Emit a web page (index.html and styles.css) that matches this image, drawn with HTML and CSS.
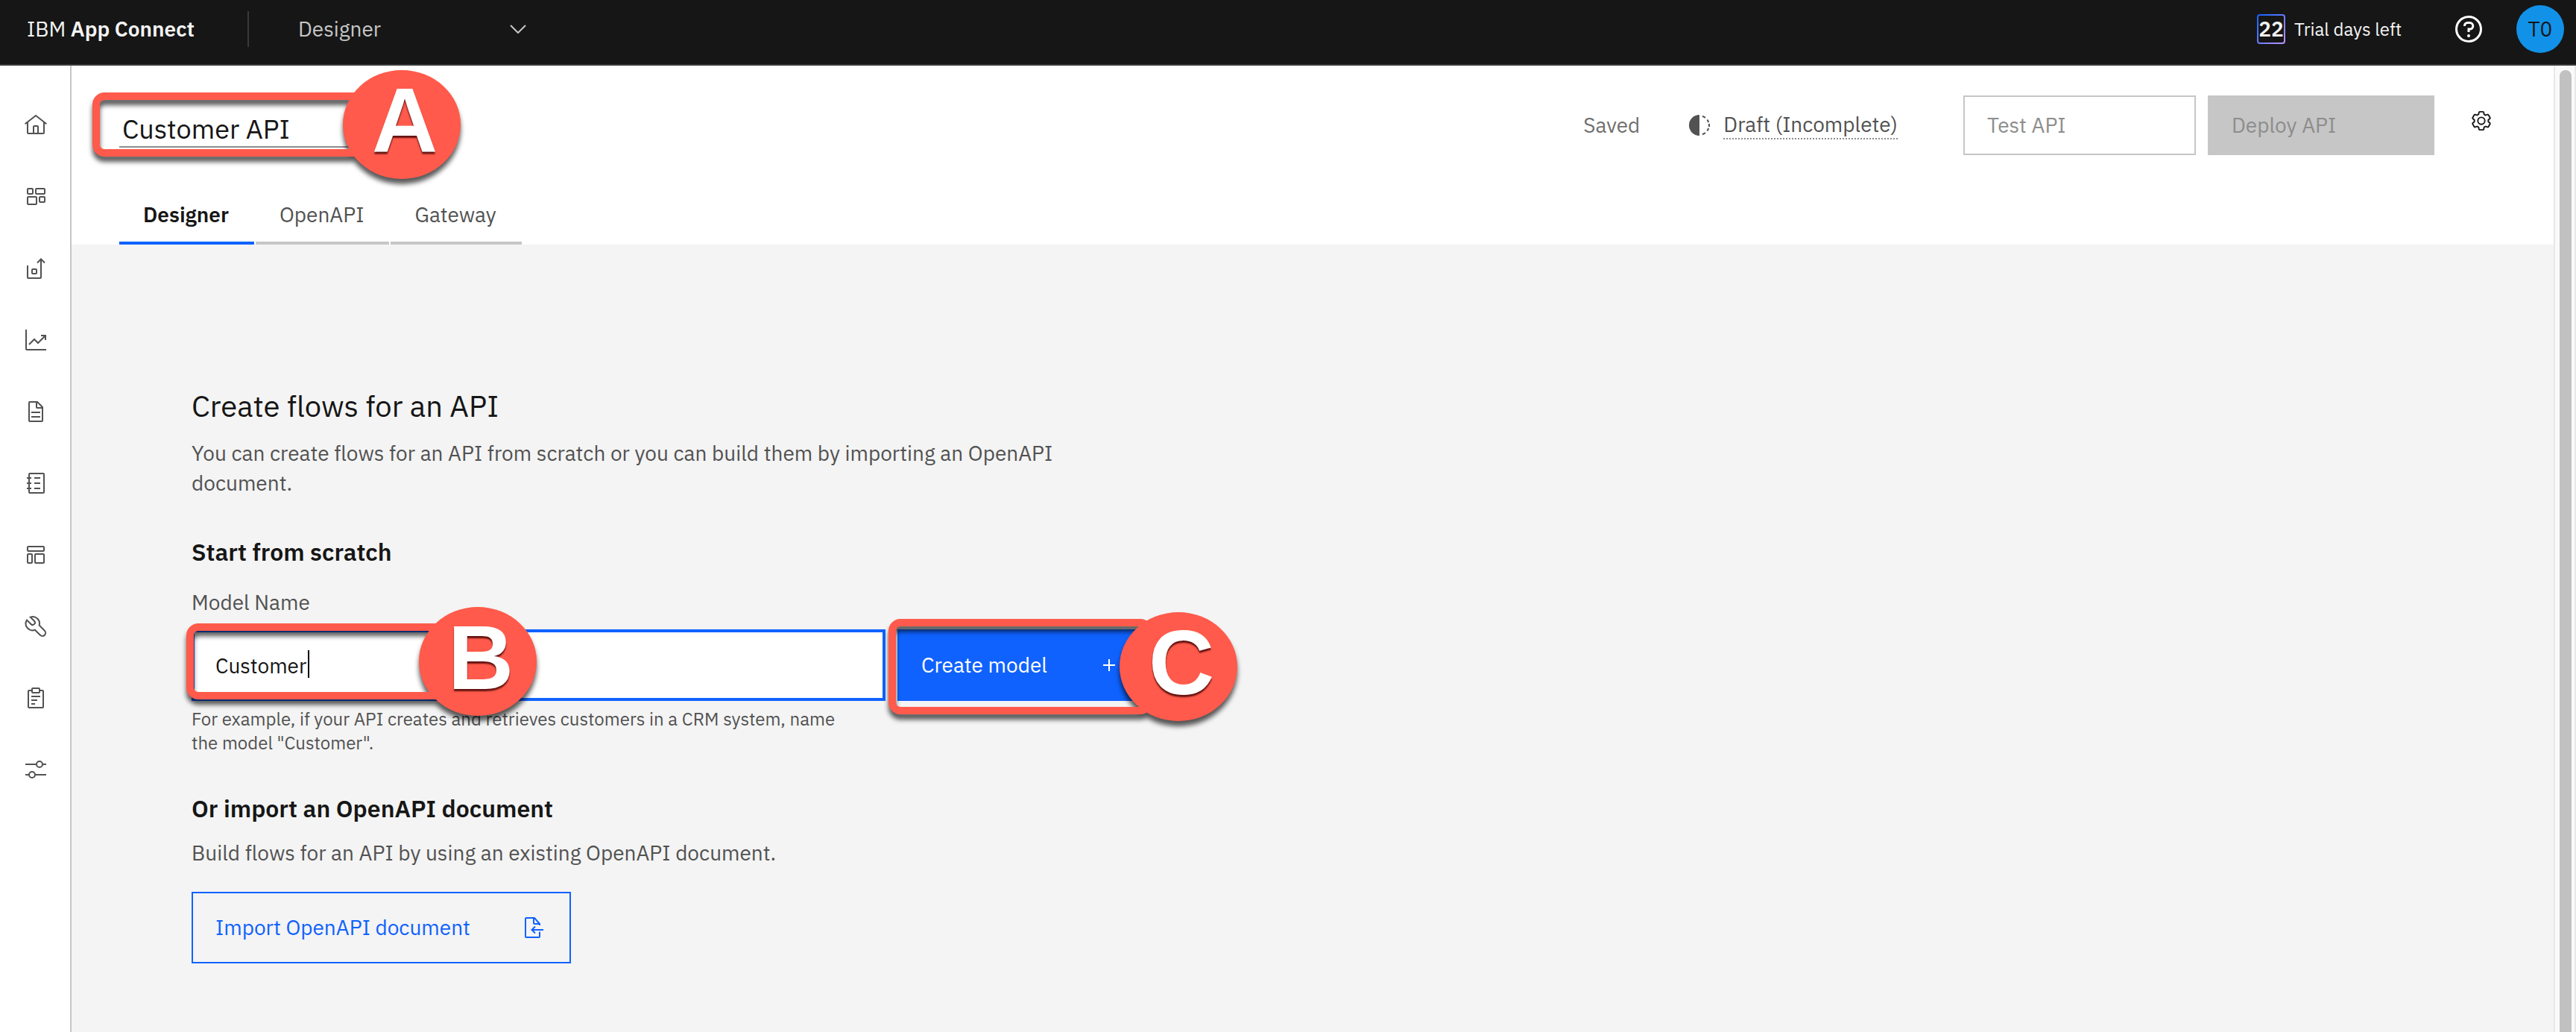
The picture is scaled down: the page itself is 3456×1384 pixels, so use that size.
FILE: index.html
```html
<!DOCTYPE html>
<html lang="en">
<head>
<meta charset="utf-8">
<title>IBM App Connect - Designer</title>
<link rel="stylesheet" href="styles.css">
</head>
<body>
<header class="topbar">
  <a class="brand" href="#">IBM <strong>App Connect</strong></a>
  <button class="switcher" type="button">Designer
    <svg class="icon-chevron" viewBox="0 0 22 12"><path d="M1 1l10 10L21 1"/></svg>
  </button>
  <div class="topbar-right">
    <div class="trial"><span class="trial-days">22</span><span class="trial-text">Trial days left</span></div>
    <button class="help" type="button" aria-label="Help">
      <svg viewBox="0 0 36 36"><circle cx="18" cy="18" r="16.5"/><path d="M12.5 14v-.5a4 4 0 0 1 4-4h3a4.300 4.300 0 0 1 0 8.600H18V22"/><circle class="dot" cx="18" cy="27" r="2"/></svg>
    </button>
    <button class="avatar" type="button">T0</button>
  </div>
</header>
<div class="shell">
  <nav class="rail" aria-label="Main">
    <a href="#" aria-label="Home"><svg viewBox="0 0 32 32"><path d="M1.600 14.200L16 3l14.400 11.200M5 12v14a1 1 0 0 0 1 1h20a1 1 0 0 0 1-1V12M13 27v-9a1 1 0 0 1 1-1h4a1 1 0 0 1 1 1v9"/></svg></a>
    <a href="#" aria-label="Dashboard"><svg viewBox="0 0 32 32"><rect x="5" y="5" width="7" height="7" rx="1"/><rect x="16" y="5" width="12" height="7" rx="1"/><rect x="5" y="16" width="12" height="10" rx="1"/><rect x="21" y="16" width="7" height="7" rx="1"/></svg></a>
    <a href="#" aria-label="Deploy"><svg viewBox="0 0 32 32"><path d="M5 12v16a1 1 0 0 0 1 1h16a1 1 0 0 0 1-1V3M18 8.500L23 3.500l5 5"/><rect x="11" y="17" width="6" height="6" rx="1"/></svg></a>
    <a href="#" aria-label="Metrics"><svg viewBox="0 0 32 32"><path d="M3 2v26a1 1 0 0 0 1 1h26M7 22l7-7 5 5L29 10M23 10h6v6"/></svg></a>
    <a href="#" aria-label="Documents"><svg viewBox="0 0 32 32"><path d="M18 3H8a1 1 0 0 0-1 1v24a1 1 0 0 0 1 1h16a1 1 0 0 0 1-1V10zM17 3v7a1 1 0 0 0 1 1h7M10 17h12M10 23h12"/></svg></a>
    <a href="#" aria-label="Catalog"><svg viewBox="0 0 32 32"><rect x="7" y="3" width="20" height="26" rx="1"/><path d="M4 9h6M4 16h6M4 23h6M14 9h8M14 16h8M14 23h8"/></svg></a>
    <a href="#" aria-label="Templates"><svg viewBox="0 0 32 32"><rect x="5" y="5" width="22" height="6" rx="1"/><rect x="5" y="15" width="6" height="12" rx="1"/><rect x="15" y="15" width="12" height="12" rx="1"/></svg></a>
    <a href="#" aria-label="Tools"><svg viewBox="0 0 32 32"><path d="M8.800 3.600A9 9 0 0 1 20.600 14.500L27.800 21.800A4 4 0 0 1 22 27.800L14.800 20.700A9 9 0 0 1 4 7.500L9.500 13A3.100 3.100 0 0 0 14 8.700z"/></svg></a>
    <a href="#" aria-label="Logs"><svg viewBox="0 0 32 32"><path d="M11 6H7a1 1 0 0 0-1 1v21a1 1 0 0 0 1 1h18a1 1 0 0 0 1-1V7a1 1 0 0 0-1-1h-4M10 14h12M10 19h8M10 24h5"/><rect x="11" y="3" width="10" height="6" rx="1"/></svg></a>
    <a href="#" aria-label="Settings"><svg viewBox="0 0 32 32"><path d="M2 9h15M25 9h5M2 23h5M15 23h15"/><circle cx="21" cy="9" r="4"/><circle cx="11" cy="23" r="4"/></svg></a>
  </nav>
  <main class="page">
    <div class="page-head">
      <div class="title-row">
        <div class="title-field">
          <input class="title-input" type="text" value="Customer API" aria-label="API name">
          <div class="callout callout-a"><span class="callout-badge">A</span></div>
        </div>
        <div class="status">
          <span class="saved">Saved</span>
          <svg class="icon-draft" viewBox="0 0 28 28"><path class="half" d="M14 0a14 14 0 0 0 0 28z"/><path class="dash" d="M18 1.600l4 2.300M24.500 6.500l1.800 3.500M27 12v4M26.300 18l-1.800 3.500M22 24.100l-4 2.300"/></svg>
          <a class="draft" href="#">Draft (Incomplete)</a>
          <button class="btn test" type="button" disabled>Test API</button>
          <button class="btn deploy" type="button" disabled>Deploy API</button>
          <button class="gear" type="button" aria-label="Settings"><svg viewBox="0 0 32 32"><path d="M27 16.760c0-.25 0-.5 0-.76s0-.51 0-.77l1.920-1.680A2 2 0 0 0 29.300 11L26.940 7a2 2 0 0 0-1.730-1 2 2 0 0 0-.64.1l-2.430.82a11.350 11.350 0 0 0-1.310-.75l-.51-2.520a2 2 0 0 0-2-1.610H13.640a2 2 0 0 0-2 1.610l-.51 2.520a11.480 11.480 0 0 0-1.320.75L7.430 6.060A2 2 0 0 0 6.790 6 2 2 0 0 0 5.060 7L2.700 11a2 2 0 0 0 .41 2.510L5 15.240c0 .25 0 .5 0 .76s0 .51 0 .77L3.110 18.450A2 2 0 0 0 2.700 21L5.060 25a2 2 0 0 0 1.730 1 2 2 0 0 0 .64-.1l2.430-.82a11.350 11.350 0 0 0 1.310.75l.51 2.520a2 2 0 0 0 2 1.610h4.720a2 2 0 0 0 2-1.610l.51-2.520a11.480 11.480 0 0 0 1.320-.75l2.420.82a2 2 0 0 0 .64.1 2 2 0 0 0 1.730-1L29.300 21a2 2 0 0 0-.41-2.510ZM25.210 24l-3.430-1.160a8.860 8.860 0 0 1-2.710 1.570L18.360 28H13.640l-.71-3.550a9.360 9.360 0 0 1-2.700-1.570L6.790 24 4.430 20l2.720-2.400a8.900 8.900 0 0 1 0-3.130L4.430 12 6.790 8l3.430 1.160a8.860 8.860 0 0 1 2.710-1.570L13.640 4h4.720l.71 3.550a9.360 9.360 0 0 1 2.700 1.570L25.210 8 27.570 12l-2.720 2.400a8.900 8.900 0 0 1 0 3.130L27.570 20Z"/><circle cx="16" cy="16" r="5"/></svg></button>
        </div>
      </div>
      <div class="tabs" role="tablist">
        <button class="tab tab-active" type="button" role="tab" aria-selected="true">Designer</button>
        <button class="tab" type="button" role="tab">OpenAPI</button>
        <button class="tab" type="button" role="tab">Gateway</button>
      </div>
    </div>
    <section class="content">
      <h1>Create flows for an API</h1>
      <p class="intro">You can create flows for an API from scratch or you can build them by importing an OpenAPI document.</p>
      <h2>Start from scratch</h2>
      <label class="field-label" for="model">Model Name</label>
      <div class="model-row">
        <div class="model-field">
          <input class="model-input" id="model" type="text" value="Customer">
          <span class="caret"></span>
          <div class="callout callout-b"><span class="callout-badge">B</span></div>
        </div>
        <div class="create-wrap">
          <button class="btn create" type="button">Create model
            <svg class="icon-plus" viewBox="0 0 16 16"><path d="M8 0v16M0 8h16"/></svg>
          </button>
          <div class="callout callout-c"><span class="callout-badge">C</span></div>
        </div>
      </div>
      <p class="hint">For example, if your API creates and retrieves customers in a CRM system, name the model "Customer".</p>
      <h2>Or import an OpenAPI document</h2>
      <p class="import-text">Build flows for an API by using an existing OpenAPI document.</p>
      <button class="btn import" type="button">Import OpenAPI document
        <svg class="icon-import" viewBox="0 0 28 32"><path d="M22 21.500V28a1 1 0 0 1-1 1H4a1 1 0 0 1-1-1V4a1 1 0 0 1 1-1h11l7 8v2M14 3v7a1 1 0 0 0 1 1h7M27 19H12M16 14.500L11.500 19l4.500 4.500"/></svg>
      </button>
    </section>
  </main>
  <div class="scroll"><div class="thumb"></div></div>
</div>
</body>
</html>
```
FILE: styles.css
```css
* { box-sizing: border-box; }
body {
  margin: 0;
  min-height: 100vh;
  display: flex;
  flex-direction: column;
  font: 28px/40px "IBM Plex Sans", Roboto, sans-serif;
  color: #525252;
  background: #f4f4f4;
}
button, input { font: inherit; color: inherit; border: 0; border-radius: 0; margin: 0; padding: 0; background: none; outline: 0; }
button { text-align: left; }
a { color: inherit; text-decoration: none; }
h1, h2, p { margin: 0; }
svg { display: block; fill: none; stroke: currentColor; stroke-width: 2; flex: none; }

/* top bar */
.topbar {
  height: 88px;
  padding: 0 16px 8px 36px;
  display: flex;
  align-items: center;
  background: #161616;
  border-bottom: 2px solid #393939;
  color: #f4f4f4;
}
.brand { width: 296px; }
.brand strong { font-weight: 600; }
.switcher {
  width: 374px;
  height: 48px;
  padding-left: 66px;
  display: flex;
  align-items: center;
  justify-content: space-between;
  border-left: 2px solid #393939;
  color: #c6c6c6;
}
.icon-chevron { width: 22px; height: 12px; }
.topbar-right { margin-left: auto; display: flex; align-items: center; }
.trial { display: flex; align-items: center; gap: 12px; margin-right: 64px; }
.trial-text { min-width: 152px; font-size: 24px; }
.trial-days {
  width: 38px;
  height: 40px;
  border: 2px solid transparent;
  border-radius: 4px;
  background: linear-gradient(#161616, #161616) padding-box, linear-gradient(135deg, #0f62fe, #be95ff) border-box;
  font-weight: 600;
  line-height: 36px;
  text-align: center;
}
.help { margin-right: 46px; color: #fff; }
.help svg { width: 36px; height: 36px; stroke-width: 3; }
.help .dot { fill: currentColor; stroke: none; }
.avatar { width: 64px; height: 64px; border-radius: 50%; background: #1192e8; color: #161616; text-align: center; }

/* shell */
.shell { flex: 1; display: flex; }
.rail { width: 96px; padding-top: 32px; border-right: 2px solid #c6c6c6; background: #fff; flex: none; }
.rail a { height: 96px; padding-left: 32px; display: flex; align-items: center; }
.rail svg { width: 32px; height: 32px; }
.page { flex: 1; min-width: 0; }
.scroll { width: 30px; padding: 6px 4px 0 6px; display: flex; background: #fafafa; border: solid #e8e8e8; border-width: 0 2px; flex: none; }
.thumb { width: 16px; border-radius: 8px 8px 0 0; background: #c1c1c1; }

/* page header */
.page-head { padding: 40px 82px 0 64px; background: #fff; }
.title-row { height: 80px; display: flex; justify-content: space-between; }
.title-field { position: relative; }
.title-input { width: 340px; height: 70px; padding: 20px 4px 0; border-bottom: 2px solid #8d8d8d; font-size: 36px; line-height: 48px; color: #161616; }
.status { display: flex; align-items: center; }
.saved { color: #6f6f6f; margin-right: 66px; }
.icon-draft { width: 28px; height: 28px; margin-right: 18px; }
.icon-draft .half { fill: currentColor; stroke: none; }
.draft { border-bottom: 2px dotted #8d8d8d; margin-right: 88px; line-height: 36px; }
.btn { display: flex; align-items: center; justify-content: space-between; padding: 0 32px; white-space: nowrap; }
.test { width: 312px; height: 80px; border: 2px solid #c6c6c6; padding: 0 30px; color: #8d8d8d; margin-right: 16px; }
.deploy { width: 304px; height: 80px; background: #c6c6c6; color: #8d8d8d; margin-right: 48px; }
.gear { color: #161616; margin-bottom: 12px; }
.gear svg { width: 30px; height: 30px; }
.gear path { fill: currentColor; stroke: none; }
.tabs { display: flex; gap: 2px; margin-top: 40px; }
.tab { height: 80px; padding: 4px 34px 0 32px; border-bottom: 4px solid #c6c6c6; }
.tab-active { border-color: #0f62fe; color: #161616; font-weight: 600; }

/* content */
.content { padding: 192px 160px 0 161px; }
h1 { margin-bottom: 20px; font-size: 40px; line-height: 48px; font-weight: 400; color: #161616; }
h2 { font-size: 32px; line-height: 40px; font-weight: 600; color: #161616; }
.intro { max-width: 1210px; margin-bottom: 52px; }
.field-label { display: block; margin: 28px 0 16px; }
.model-row { display: flex; gap: 16px; }
.model-field { position: relative; width: 931px; }
.model-input { display: block; width: 100%; height: 96px; padding: 0 28px; border: 4px solid #0f62fe; background: #fff; color: #161616; }
.caret { position: absolute; left: 156px; top: 28px; width: 2px; height: 37px; background: #000; }
.create-wrap { position: relative; }
.create { width: 324px; height: 96px; background: #0f62fe; color: #fff; }
.icon-plus { width: 16px; height: 16px; }
.hint { max-width: 880px; margin: 8px 0 52px; font-size: 24px; line-height: 32px; }
.import-text { margin: 20px 0 32px; }
.import { width: 509px; height: 96px; padding: 0 34px 0 30px; border: 2px solid #0f62fe; color: #0f62fe; }
.icon-import { width: 28px; height: 32px; }

/* lettered callouts laid over the controls they explain */
.callout { position: absolute; z-index: 1; border: 10px solid #ff5a4b; border-radius: 16px; filter: drop-shadow(0 7px 3px rgba(0, 0, 0, .65)); pointer-events: none; }
.callout-a { left: -36px; top: -4px; width: 424px; height: 86px; }
.callout-b { left: -7px; top: -8px; width: 400px; height: 102px; }
.callout-c { left: -12px; top: -14px; width: 354px; height: 128px; }
.callout-badge {
  position: absolute;
  right: -80px;
  top: 50%;
  width: 158px;
  height: 146px;
  margin-top: -73px;
  padding-left: 8px;
  border-radius: 50%;
  background: #ff5a4b;
  color: #fff;
  font: bold 122px/136px "Liberation Sans", sans-serif;
  text-align: center;
  text-shadow: 0 3px 2px rgba(60, 0, 0, .8);
}
.callout-c .callout-badge { right: -124px; }
```
